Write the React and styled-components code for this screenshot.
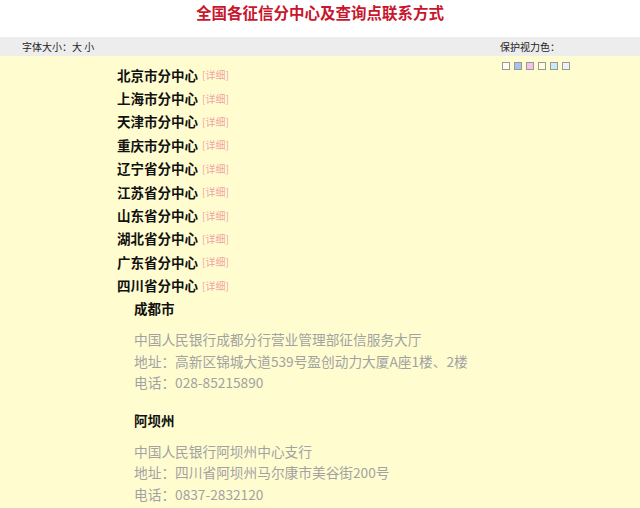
import React from "react";
import styled, { createGlobalStyle } from "styled-components";

const GlobalStyle = createGlobalStyle`
  html, body {
    margin: 0;
    padding: 0;
    background: #fffdd0;
    font-family: "Noto Sans CJK SC", "Noto Sans", sans-serif;
  }
`;

const Page = styled.div`
  width: 640px;
  min-height: 508px;
  background: #fffdd0;
`;

const Header = styled.div`
  background: #fff;
  height: 37px;
  display: flex;
  justify-content: center;
  align-items: flex-start;
`;

const Title = styled.h1`
  margin: 1px 0 0;
  font-size: 15.5px;
  font-weight: bold;
  color: #c8162c;
  line-height: 22px;
`;

const Toolbar = styled.div`
  height: 19px;
  background: #ededed;
  display: flex;
  justify-content: space-between;
  align-items: center;
  padding: 0 80px 0 22px;
  font-size: 10px;
  color: #222;
`;

const SwatchRow = styled.div`
  display: flex;
  justify-content: flex-end;
  gap: 4px;
  padding: 6px 70px 0 0;
  height: 8px;
`;

const Swatch = styled.span`
  width: 6px;
  height: 6px;
  border: 1px solid #999;
  background: ${(p) => p.color};
`;

const List = styled.ul`
  list-style: none;
  margin: 0;
  padding: 0 0 0 117px;
  position: relative;
  top: -7px;
`;

const Item = styled.li`
  height: 23.4px;
  display: flex;
  align-items: center;
`;

const Name = styled.span`
  font-size: 13.5px;
  font-weight: bold;
  color: #111;
`;

const Detail = styled.a`
  margin-left: 4px;
  font-size: 10px;
  color: #f2a4a4;
`;

const Branches = styled.div`
  padding: 1px 0 0 134px;
  position: relative;
  top: -7px;
`;

const Branch = styled.div`
  margin-bottom: 16px;
`;

const City = styled.div`
  font-size: 13.5px;
  font-weight: bold;
  color: #111;
  height: 20px;
  line-height: 20px;
  margin-bottom: 11px;
`;

const Line = styled.div`
  font-size: 13.7px;
  color: #a2a2a2;
  height: 21.6px;
  line-height: 21.6px;
  white-space: nowrap;
`;

const centers = [
  "北京市分中心",
  "上海市分中心",
  "天津市分中心",
  "重庆市分中心",
  "辽宁省分中心",
  "江苏省分中心",
  "山东省分中心",
  "湖北省分中心",
  "广东省分中心",
  "四川省分中心",
];

const branches = [
  {
    city: "成都市",
    name: "中国人民银行成都分行营业管理部征信服务大厅",
    addr: "地址：高新区锦城大道539号盈创动力大厦A座1楼、2楼",
    tel: "电话：028-85215890",
  },
  {
    city: "阿坝州",
    name: "中国人民银行阿坝州中心支行",
    addr: "地址：四川省阿坝州马尔康市美谷街200号",
    tel: "电话：0837-2832120",
  },
];

const swatches = ["#fffdf0", "#a8c4ea", "#f2c4ea", "#fffbe0", "#c8eaf8", "#eef2f8"];

export default function App() {
  return (
    <Page>
      <GlobalStyle />
      <Header>
        <Title>全国各征信分中心及查询点联系方式</Title>
      </Header>
      <Toolbar>
        <span>字体大小：大 小</span>
        <span>保护视力色：</span>
      </Toolbar>
      <SwatchRow>
        {swatches.map((c, i) => (
          <Swatch key={i} color={c} />
        ))}
      </SwatchRow>
      <List>
        {centers.map((c) => (
          <Item key={c}>
            <Name>{c}</Name>
            <Detail>[详细]</Detail>
          </Item>
        ))}
      </List>
      <Branches>
        {branches.map((b) => (
          <Branch key={b.city}>
            <City>{b.city}</City>
            <Line>{b.name}</Line>
            <Line>{b.addr}</Line>
            <Line>{b.tel}</Line>
          </Branch>
        ))}
      </Branches>
    </Page>
  );
}
